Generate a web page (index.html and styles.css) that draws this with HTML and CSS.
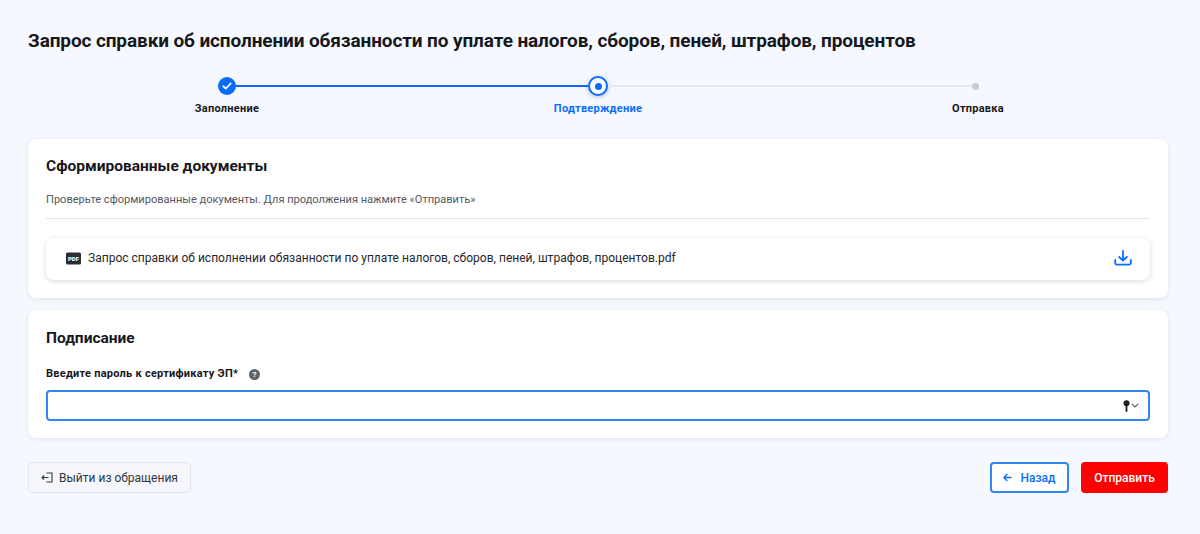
FILE: index.html
```html
<!DOCTYPE html>
<html lang="ru">
<head>
<meta charset="utf-8">
<title>Запрос справки</title>
<link rel="stylesheet" href="styles.css">
</head>
<body>
<main class="page">
  <h1 class="title">Запрос справки об исполнении обязанности по уплате налогов, сборов, пеней, штрафов, процентов</h1>
  <div class="stepper">
    <div class="track">
      <span class="node node-done">
        <svg width="10" height="8" viewBox="0 0 10 8" fill="none"><path d="M1.2 4.2 3.7 6.6 8.8 1.4" stroke="#fff" stroke-width="1.6" stroke-linecap="round" stroke-linejoin="round"/></svg>
      </span>
      <span class="line line-active"></span>
      <span class="node node-current"><span class="node-inner"></span></span>
      <span class="line line-idle"></span>
      <span class="node node-idle"></span>
    </div>
    <div class="labels">
      <span class="label">Заполнение</span>
      <span class="label label-current">Подтверждение</span>
      <span class="label">Отправка</span>
    </div>
  </div>
  <section class="card card-docs">
    <h2 class="card-title">Сформированные документы</h2>
    <p class="hint">Проверьте сформированные документы. Для продолжения нажмите «Отправить»</p>
    <div class="file">
      <svg class="pdf-icon" width="15" height="13" viewBox="0 0 15 13"><rect width="15" height="12" y="0.5" rx="1.5" fill="#2b2d33"/></svg>
      <span class="pdf-tag">PDF</span>
      <span class="file-name">Запрос справки об исполнении обязанности по уплате налогов, сборов, пеней, штрафов, процентов.pdf</span>
      <svg class="download" width="18" height="16" viewBox="0 0 18 16" fill="none" stroke="#0a6cff" stroke-width="1.8" stroke-linecap="round" stroke-linejoin="round"><path d="M9 1v9.5M5.2 7 9 10.7 12.8 7"/><path d="M1.2 10v3a1.6 1.6 0 0 0 1.6 1.6h12.4a1.6 1.6 0 0 0 1.6-1.6v-3"/></svg>
    </div>
  </section>
  <section class="card card-sign">
    <h2 class="card-title">Подписание</h2>
    <div class="field-label">
      <span>Введите пароль к сертификату ЭП*</span>
      <span class="help">?</span>
    </div>
    <div class="input">
      <svg width="7" height="12" viewBox="0 0 7 12"><circle cx="3.5" cy="3.2" r="3" fill="#1c1d20"/><path d="M2.6 5h1.8v6.4l-.9.6-.9-.6z" fill="#1c1d20"/></svg>
      <svg width="8" height="5" viewBox="0 0 8 5" fill="none"><path d="M.8.8 4 4l3.2-3.2" stroke="#55585f" stroke-width="1.1"/></svg>
    </div>
  </section>
  <footer class="actions">
    <button class="btn btn-exit" type="button">
      <svg width="12" height="11" viewBox="0 0 12 11" fill="none" stroke="#33363c" stroke-width="1.1"><path d="M5.5 1H11v9H5.5"/><path d="M7.5 5.5H1M3.2 3.3 1 5.5l2.2 2.2"/></svg>
      Выйти из обращения
    </button>
    <div class="actions-right">
      <button class="btn btn-back" type="button">
        <svg width="9" height="9" viewBox="0 0 9 9" fill="none" stroke="#0a6cff" stroke-width="1.3"><path d="M8.5 4.5H1M4.3 1 1 4.5 4.3 8"/></svg>
        Назад
      </button>
      <button class="btn btn-send" type="button">Отправить</button>
    </div>
  </footer>
</main>
</body>
</html>
```
FILE: styles.css
```css
* { box-sizing: border-box; }
html, body { margin: 0; height: 100%; }
body {
  background: #f5f8ff;
  font-family: Roboto, "Noto Sans", sans-serif;
  color: #17181c;
}
.page { padding: 29px 32px 0 28px; }
.title {
  margin: 0;
  font-size: 19px;
  line-height: 24px;
  font-weight: 700;
  letter-spacing: -0.11px;
}
.stepper { margin-top: 23px; }
.track {
  display: flex;
  align-items: center;
  height: 20px;
  padding: 0 189px 0 190px;
}
.node { flex: none; border-radius: 50%; display: flex; align-items: center; justify-content: center; }
.node-done { width: 18px; height: 18px; background: #0a6cff; }
.node-current {
  width: 20px;
  height: 20px;
  background: #fff;
  border: 2px solid #0a6cff;
  box-shadow: 0 1px 4px rgba(10, 40, 100, .3);
}
.node-inner { width: 7px; height: 7px; border-radius: 50%; background: #0a6cff; }
.node-idle { width: 7px; height: 7px; background: #c9ccd2; }
.line { height: 2px; }
.line-active { flex: 352 1 0; background: #0a6cff; }
.line-idle { flex: 364 1 0; background: #e6e8ec; }
.labels {
  display: grid;
  grid-template-columns: 64px 678px 82px;
  padding-left: 167px;
  margin-top: 5px;
  justify-items: center;
}
.label { font-size: 11px; line-height: 16px; font-weight: 700; letter-spacing: .25px; white-space: nowrap; }
.label-current { color: #0a6cff; }
.card {
  background: #fff;
  border-radius: 8px;
  box-shadow: 0 1px 4px rgba(30, 40, 70, .1);
  padding: 17px 18px 18px;
}
.card-docs { margin-top: 22px; height: 159px; }
.card-sign { margin-top: 12px; height: 128px; padding-top: 18px; }
.card-title { margin: 0; font-size: 15.5px; line-height: 20px; font-weight: 700; }
.hint {
  margin: 16px 0 0;
  padding-bottom: 10px;
  font-size: 11.05px;
  line-height: 16px;
  color: #55585f;
  border-bottom: 1px solid #e3e5ea;
}
.file {
  position: relative;
  margin-top: 19px;
  height: 42px;
  display: flex;
  align-items: center;
  padding: 0 18px 2px 20px;
  border-radius: 8px;
  background: #fff;
  box-shadow: 0 1px 5px rgba(30, 40, 70, .18);
}
.pdf-icon { flex: none; }
.pdf-tag {
  position: absolute;
  left: 20px;
  width: 15px;
  text-align: center;
  font-size: 6px;
  font-weight: 900;
  color: #fff;
}
.file-name { margin-left: 7px; font-size: 12.04px; line-height: 18px; color: #26282d; flex: 1; }
.download { flex: none; }
.field-label {
  display: flex;
  align-items: center;
  gap: 11px;
  margin-top: 19px;
  font-size: 11px;
  line-height: 14px;
  font-weight: 700;
  letter-spacing: .25px;
}
.help {
  width: 11px;
  height: 11px;
  border-radius: 50%;
  background: #5f6269;
  color: #fff;
  font-size: 8px;
  line-height: 11px;
  text-align: center;
}
.input {
  margin-top: 9px;
  height: 31px;
  border: 2px solid #2f86f5;
  border-radius: 4px;
  display: flex;
  align-items: center;
  justify-content: flex-end;
  gap: 1px;
  padding-right: 9px;
  background: #fff;
}
.actions {
  display: flex;
  justify-content: space-between;
  margin-top: 24px;
}
.actions-right { display: flex; gap: 12px; }
.btn {
  height: 31px;
  display: flex;
  align-items: center;
  justify-content: center;
  border-radius: 4px;
  font-family: inherit;
  font-size: 12px;
  padding: 0;
}
.btn-exit {
  width: 163px;
  gap: 6px;
  color: #33363c;
  background: #f5f7fc;
  border: 1px solid #e4e6eb;
}
.btn-back {
  width: 79px;
  gap: 8px;
  color: #0a6cff;
  font-weight: 500;
  background: #fff;
  border: 2px solid #2f86f5;
}
.btn-send {
  width: 87px;
  color: #fff;
  font-weight: 500;
  background: #ff0000;
  border: none;
}
```
